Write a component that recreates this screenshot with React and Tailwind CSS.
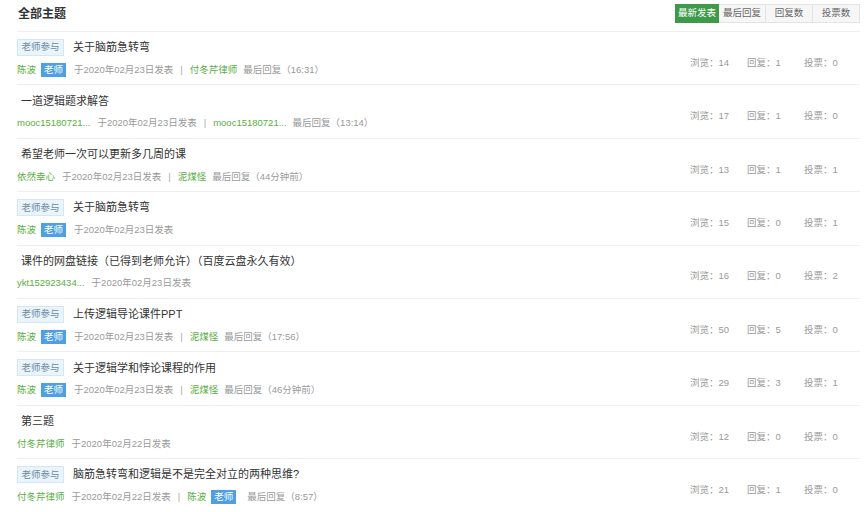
import React from 'react';

const topics = [
  {
    tag: true,
    title: '关于脑筋急转弯',
    author: '陈波',
    teacher: true,
    date: '于2020年02月23日发表',
    last: { name: '付冬芹律师', time: '最后回复（16:31）' },
    views: 14,
    replies: 1,
    votes: 0,
  },
  {
    title: '一道逻辑题求解答',
    author: 'mooc15180721...',
    date: '于2020年02月23日发表',
    last: { name: 'mooc15180721...', time: '最后回复（13:14）' },
    views: 17,
    replies: 1,
    votes: 0,
  },
  {
    title: '希望老师一次可以更新多几周的课',
    author: '依然幸心',
    date: '于2020年02月23日发表',
    last: { name: '泥煤怪', time: '最后回复（44分钟前）' },
    views: 13,
    replies: 1,
    votes: 1,
  },
  {
    tag: true,
    title: '关于脑筋急转弯',
    author: '陈波',
    teacher: true,
    date: '于2020年02月23日发表',
    views: 15,
    replies: 0,
    votes: 1,
  },
  {
    title: '课件的网盘链接（已得到老师允许）（百度云盘永久有效）',
    author: 'ykt152923434...',
    date: '于2020年02月23日发表',
    views: 16,
    replies: 0,
    votes: 2,
  },
  {
    tag: true,
    title: '上传逻辑导论课件PPT',
    author: '陈波',
    teacher: true,
    date: '于2020年02月23日发表',
    last: { name: '泥煤怪', time: '最后回复（17:56）' },
    views: 50,
    replies: 5,
    votes: 0,
  },
  {
    tag: true,
    title: '关于逻辑学和悖论课程的作用',
    author: '陈波',
    teacher: true,
    date: '于2020年02月23日发表',
    last: { name: '泥煤怪', time: '最后回复（46分钟前）' },
    views: 29,
    replies: 3,
    votes: 1,
  },
  {
    title: '第三题',
    author: '付冬芹律师',
    date: '于2020年02月22日发表',
    views: 12,
    replies: 0,
    votes: 0,
  },
  {
    tag: true,
    title: '脑筋急转弯和逻辑是不是完全对立的两种思维?',
    author: '付冬芹律师',
    date: '于2020年02月22日发表',
    last: { name: '陈波', teacher: true, time: '最后回复（8:57）' },
    views: 21,
    replies: 1,
    votes: 0,
  },
];

const TeacherBadge = () => (
  <span className="ml-[5px] mr-[5px] inline-flex h-[14px] items-center bg-[#4f9fe3] px-[3px] text-white">
    老师
  </span>
);

const TopicRow = ({ t }) => (
  <div className="flex h-[53.4px] border-b border-[#efefef]">
    <div className="flex-1 pt-[7px]">
      <div className="flex h-[17px] items-center">
        {t.tag ? (
          <span className="mr-[9px] inline-flex h-[17px] w-[47px] items-center justify-center border border-[#d3e7f6] bg-[#eaf4fc] text-[9.5px] text-[#6f8ba3]">
            老师参与
          </span>
        ) : (
          <span className="w-[4px]" />
        )}
        <span className="text-[11px] text-[#333]">{t.title}</span>
      </div>
      <div className="mt-[7px] flex h-[14px] items-center text-[9.5px] text-[#9a9a9a]">
        <span className="text-[#5aae42]">{t.author}</span>
        {t.teacher ? <TeacherBadge /> : <span className="w-[7px]" />}
        <span className={t.teacher ? 'ml-[3px]' : ''}>{t.date}</span>
        {t.last && (
          <>
            <span className="mx-[7px] text-[#aaa]">|</span>
            <span className="text-[#5aae42]">{t.last.name}</span>
            {t.last.teacher ? <TeacherBadge /> : <span className="w-[6px]" />}
            <span className={t.last.teacher ? 'ml-[6px]' : ''}>{t.last.time}</span>
          </>
        )}
      </div>
    </div>
    <div className="mt-[24px] flex h-[14px] w-[170px] items-center text-[9.5px] text-[#9a9a9a]">
      <span className="w-[57px]">浏览：{t.views}</span>
      <span className="w-[57px]">回复：{t.replies}</span>
      <span className="w-[56px]">投票：{t.votes}</span>
    </div>
  </div>
);

export default function App() {
  const tabs = ['最新发表', '最后回复', '回复数', '投票数'];
  return (
    <div
      className="h-[512px] w-[864px] overflow-hidden bg-white pl-[17px] pr-[4px]"
      style={{ fontFamily: '"Liberation Sans", "Noto Sans CJK SC", sans-serif' }}
    >
      <div className="flex h-[32px] items-start border-b border-[#efefef]">
        <h2 className="mt-[5px] flex-1 pl-[1px] text-[12px] font-bold text-[#333]">全部主题</h2>
        <div className="mt-[4px] flex h-[19px]">
          {tabs.map((tab, i) => (
            <span
              key={tab}
              className={
                i === 0
                  ? 'flex w-[44px] items-center justify-center bg-[#3d9a48] text-[9.5px] text-white'
                  : 'flex w-[47px] items-center justify-center border border-l-0 border-[#e3e3e3] bg-[#f6f6f6] text-[9.5px] text-[#666]'
              }
            >
              {tab}
            </span>
          ))}
        </div>
      </div>
      {topics.map((t, i) => (
        <TopicRow key={i} t={t} />
      ))}
    </div>
  );
}
